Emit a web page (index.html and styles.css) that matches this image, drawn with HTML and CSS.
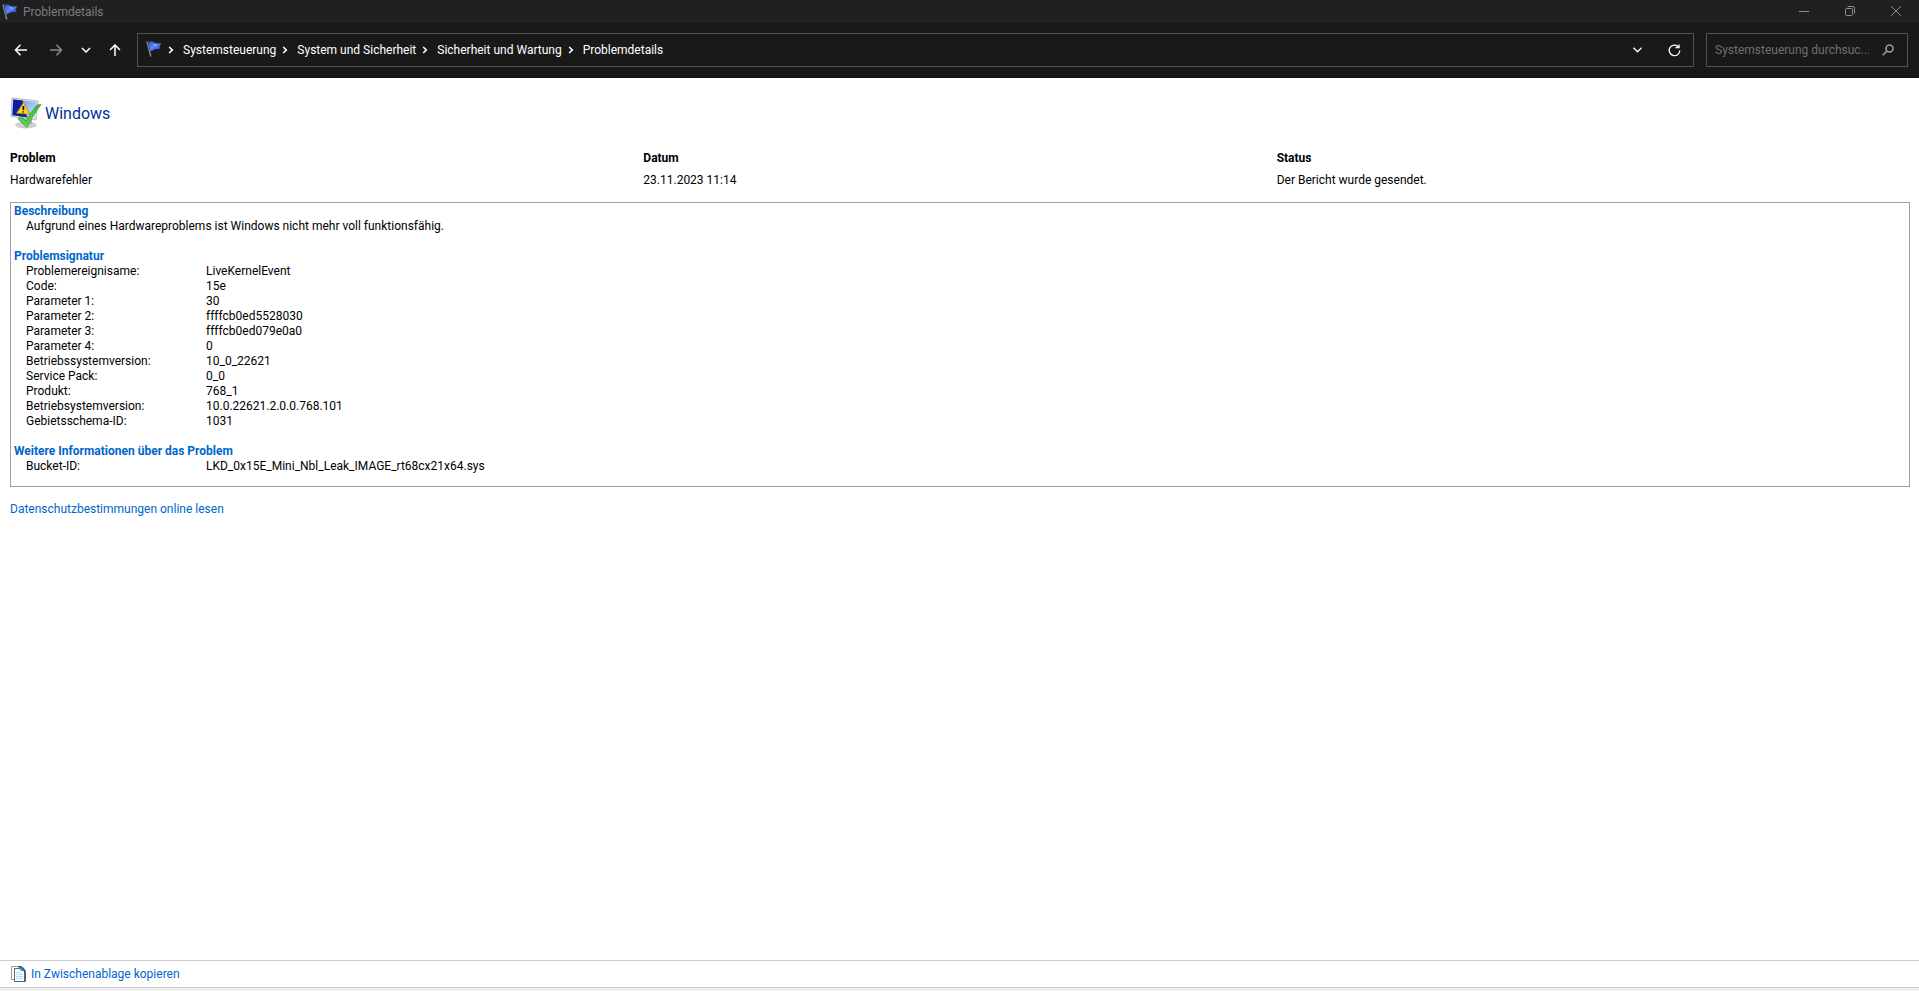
FILE: index.html
```
<!DOCTYPE html>
<html lang="de">
<head>
    <meta charset="UTF-8">
    <meta name="viewport" content="width=device-width, initial-scale=1.0">
    <title>Problemdetails</title>
    <link rel="stylesheet" href="styles.css">
</head>
<body>

<svg class="symbols" aria-hidden="true">
    <linearGradient id="flagBlue" x1="0" y1="0" x2="1" y2="1">
        <stop offset="0" stop-color="#2b50c8"/>
        <stop offset="0.45" stop-color="#6684e6"/>
        <stop offset="1" stop-color="#1c3bb4"/>
    </linearGradient>
    <symbol id="flag" viewBox="0 0 16 16">
        <path d="M1 .5L4.800 15.500" stroke="#77808a" stroke-width="1.6" fill="none"/>
        <path d="M2 1.200C4 .2 6.500 .2 8 1.500C9.500 2.500 12 2.500 15.500 2.200C13.800 3.800 13.300 5.500 14.500 7.500C12 8.500 10 7.500 8.500 8.500C7 9.500 5.500 9.500 4.300 11Z" fill="url(#flagBlue)" stroke="#2440a8" stroke-width=".5"/>
        <path d="M7 3.500Q9.500 2.500 11.500 5Q9 5 7 3.500Z" fill="#a9bdfa"/>
    </symbol>
    <symbol id="crumb" viewBox="0 0 6 8">
        <path d="M1.200 1L4.300 4L1.200 7" stroke="#fff" stroke-width="1.6" fill="none"/>
    </symbol>
</svg>

<header>
    <div class="title-bar">
        <svg class="flag" aria-hidden="true"><use href="#flag"/></svg>
        <span class="window-title">Problemdetails</span>
        <div class="window-buttons">
            <button type="button" aria-label="Minimieren">
                <svg width="10" height="10" viewBox="0 0 10 10"><path d="M0 5.500H10"/></svg>
            </button>
            <button type="button" aria-label="Verkleinern">
                <svg width="10" height="10" viewBox="0 0 10 10"><rect x=".5" y="2.500" width="7" height="7" rx="1"/><path d="M2.500 .5H8Q9.500 .5 9.500 2V7.500"/></svg>
            </button>
            <button type="button" aria-label="Schließen">
                <svg width="10" height="10" viewBox="0 0 10 10"><path d="M0 0L10 10M10 0L0 10"/></svg>
            </button>
        </div>
    </div>

    <div class="toolbar">
        <nav class="history" aria-label="Verlauf">
            <button type="button" aria-label="Zurück">
                <svg width="14" height="12" viewBox="0 0 14 12"><path d="M6.500 .8L1.500 6L6.500 11.200M1.500 6H13"/></svg>
            </button>
            <button type="button" class="off" aria-label="Vorwärts">
                <svg width="14" height="12" viewBox="0 0 14 12"><path d="M7.500 .8L12.500 6L7.500 11.200M12.500 6H1"/></svg>
            </button>
            <button type="button" class="recent" aria-label="Zuletzt besucht">
                <svg width="10" height="6" viewBox="0 0 10 6"><path d="M1 1L5 5L9 1"/></svg>
            </button>
            <button type="button" class="up" aria-label="Nach oben">
                <svg width="12" height="12" viewBox="0 0 12 12"><path d="M1 6L6 1L11 6M6 1V12"/></svg>
            </button>
        </nav>

        <div class="address">
            <svg class="flag" aria-hidden="true"><use href="#flag"/></svg>
            <svg class="crumb" aria-hidden="true"><use href="#crumb"/></svg>
            <a href="#">Systemsteuerung</a>
            <svg class="crumb" aria-hidden="true"><use href="#crumb"/></svg>
            <a href="#">System und Sicherheit</a>
            <svg class="crumb" aria-hidden="true"><use href="#crumb"/></svg>
            <a href="#">Sicherheit und Wartung</a>
            <svg class="crumb" aria-hidden="true"><use href="#crumb"/></svg>
            <a href="#">Problemdetails</a>
            <div class="address-buttons">
                <button type="button" aria-label="Vorherige Orte">
                    <svg width="9" height="6" viewBox="0 0 9 6"><path d="M.5 .8L4.500 4.800L8.500 .8"/></svg>
                </button>
                <button type="button" aria-label="Aktualisieren">
                    <svg width="13" height="13" viewBox="0 0 13 13"><path d="M10.600 3A5.300 5.300 0 1 0 11.800 6.500M11 .5V3.700H7.500"/></svg>
                </button>
            </div>
        </div>

        <div class="search">
            <input type="text" aria-label="Systemsteuerung durchsuchen" placeholder="Systemsteuerung durchsuc...">
            <button type="button" aria-label="Suchen">
                <svg width="12" height="12" viewBox="0 0 12 12"><circle cx="7.500" cy="4.500" r="3.500"/><path d="M5 7L.7 11.300"/></svg>
            </button>
        </div>
    </div>
</header>

<main>
    <div class="heading">
        <svg class="report-icon" viewBox="0 0 32 32" aria-hidden="true">
            <defs>
                <linearGradient id="screen" x1="0" y1="0" x2="1" y2="1">
                    <stop offset="0" stop-color="#5c8cea"/>
                    <stop offset="1" stop-color="#dceafc"/>
                </linearGradient>
                <linearGradient id="tick" x1="0" y1="0" x2="0" y2="1">
                    <stop offset="0" stop-color="#3fb83a"/>
                    <stop offset="1" stop-color="#56e04c"/>
                </linearGradient>
            </defs>
            <ellipse cx="16" cy="28" rx="11" ry="3.500" fill="#cfcfcf"/>
            <path d="M13 20H22V27H13Z" fill="#b4b4b4"/>
            <path d="M2 1L28 4L26 23L1 19.500Z" fill="#e4e4e4" stroke="#a5a5a5" stroke-width=".7"/>
            <path d="M3.200 2.500L26.300 5L24.600 21.500L2.400 18.300Z" fill="url(#screen)"/>
            <path d="M3.200 2.500L13 3.600Q11 12 18 20.500L2.400 18.300Z" fill="#0b1ea0"/>
            <path d="M13.500 5.500L20 17.300L6.500 16.300Z" fill="#ffd51c" stroke="#a88400" stroke-width=".8" stroke-linejoin="round"/>
            <path d="M13.400 9V13M13.200 14.300V15.500" stroke="#111" stroke-width="1.700"/>
            <path d="M8 22L11.500 19.500L16 24.500Q20.500 15 27 8L31 7.500Q22 19 17 30.500Z" fill="url(#tick)" stroke="#299528" stroke-width=".7"/>
        </svg>
        <h1>Windows</h1>
    </div>

    <table class="summary">
        <thead>
            <tr><th>Problem</th><th>Datum</th><th>Status</th></tr>
        </thead>
        <tbody>
            <tr><td>Hardwarefehler</td><td>23.11.2023 11:14</td><td>Der Bericht wurde gesendet.</td></tr>
        </tbody>
    </table>

    <div class="report">
        <section>
            <h2>Beschreibung</h2>
            <p>Aufgrund eines Hardwareproblems ist Windows nicht mehr voll funktionsfähig.</p>
        </section>
        <section>
            <h2>Problemsignatur</h2>
            <table>
                <tr><th>Problemereignisame:</th><td>LiveKernelEvent</td></tr>
                <tr><th>Code:</th><td>15e</td></tr>
                <tr><th>Parameter 1:</th><td>30</td></tr>
                <tr><th>Parameter 2:</th><td>ffffcb0ed5528030</td></tr>
                <tr><th>Parameter 3:</th><td>ffffcb0ed079e0a0</td></tr>
                <tr><th>Parameter 4:</th><td>0</td></tr>
                <tr><th>Betriebssystemversion:</th><td>10_0_22621</td></tr>
                <tr><th>Service Pack:</th><td>0_0</td></tr>
                <tr><th>Produkt:</th><td>768_1</td></tr>
                <tr><th>Betriebsystemversion:</th><td>10.0.22621.2.0.0.768.101</td></tr>
                <tr><th>Gebietsschema-ID:</th><td>1031</td></tr>
            </table>
        </section>
        <section>
            <h2>Weitere Informationen über das Problem</h2>
            <table>
                <tr><th>Bucket-ID:</th><td>LKD_0x15E_Mini_Nbl_Leak_IMAGE_rt68cx21x64.sys</td></tr>
            </table>
        </section>
    </div>

    <a class="privacy" href="#">Datenschutzbestimmungen online lesen</a>
</main>

<footer>
    <a href="#">
        <svg width="15" height="16" viewBox="0 0 15 16" aria-hidden="true">
            <path d="M.5 .5H8V13.500H.5Z" fill="#fff" stroke="#9a9a9a"/>
            <path d="M3.500 2.500H10L14 6V15.500H3.500Z" fill="#fff" stroke="#5d6670"/>
            <path d="M5 6.500H11M5 8.500H12M5 10.500H12M5 12.500H12" stroke="#a9dcf8"/>
            <path d="M7 0Q12 1 14 5V15.500" fill="none" stroke="#33465c" stroke-width="1.500"/>
            <path d="M7 .5Q11 1 13.500 5.500L9.500 4.500Z" fill="#2f8fd0"/>
        </svg>
        <span>In Zwischenablage kopieren</span>
    </a>
</footer>

</body>
</html>
```
FILE: styles.css
```
* {
    box-sizing: border-box;
}
body {
    margin: 0;
    min-height: 100vh;
    display: flex;
    flex-direction: column;
    background-color: #ffffff;
    color: #000000;
    font-family: Roboto, "Noto Sans", sans-serif;
    font-size: 12px;
    line-height: 15px;
}
a {
    color: #0066cc;
    text-decoration: none;
}
a:hover {
    text-decoration: underline;
}
button {
    display: flex;
    align-items: center;
    justify-content: center;
    padding: 0;
    border: none;
    background: none;
}
button svg {
    fill: none;
    stroke: #ffffff;
}
.symbols {
    position: absolute;
    width: 0;
    height: 0;
}
.flag {
    width: 16px;
    height: 16px;
    flex: none;
}

/* Title bar */
.title-bar {
    display: flex;
    align-items: center;
    height: 23px;
    padding-left: 2px;
    background-color: #202020;
}
.window-title {
    padding-top: 2px;
    margin-left: 5px;
    color: #7d7d7d;
}
.window-buttons {
    display: flex;
    margin-left: auto;
}
.window-buttons button {
    width: 46px;
    height: 20px;
    margin-bottom: 2px;
}
.window-buttons svg {
    stroke: #8c8c8c;
}

/* Navigation toolbar */
.toolbar {
    display: flex;
    align-items: center;
    height: 55px;
    padding: 0 11px 1px 0;
    background-color: #191919;
    border-bottom: 1px solid #101010;
}
.history {
    display: flex;
    padding-left: 3px;
    width: 137px;
}
.history button {
    width: 35px;
    height: 34px;
}
.history svg {
    stroke-width: 1.5px;
}
.history .off svg {
    stroke: #8c8c8c;
}
.history .recent {
    width: 26px;
}
.history .up {
    width: 32px;
}
.address {
    display: flex;
    flex: 1;
    align-items: center;
    height: 34px;
    padding-left: 8px;
    border: 1px solid #535353;
}
.address a {
    padding-top: 2px;
    color: #ffffff;
}
.address .flag {
    margin-bottom: 2px;
}
.crumb {
    width: 6px;
    height: 8px;
    margin: 0 9px 0 6px;
    flex: none;
}
.address-buttons {
    display: flex;
    margin-left: auto;
}
.address-buttons button {
    width: 37px;
    height: 32px;
    padding-top: 1px;
}
.address-buttons svg {
    stroke-width: 1.3px;
}
.search {
    display: flex;
    align-items: center;
    width: 202px;
    height: 34px;
    margin-left: 12px;
    border: 1px solid #535353;
}
.search input {
    flex: 1;
    min-width: 0;
    padding: 2px 0 0 8px;
    border: none;
    outline: none;
    background: none;
    color: #ffffff;
    font: inherit;
}
.search input::placeholder {
    color: #6f6f6f;
    opacity: 1;
}
.search button {
    width: 38px;
    height: 32px;
}
.search button svg {
    stroke: #9c9c9c;
    stroke-width: 1.6px;
}

/* Problem report */
main {
    flex: 1;
    padding: 19px 9px 19px 10px;
}
.heading {
    display: flex;
    align-items: center;
    gap: 3px;
    height: 32px;
}
.report-icon {
    width: 32px;
    height: 32px;
}
h1 {
    margin: 0;
    padding-top: 2px;
    color: #003399;
    font-size: 16px;
    font-weight: 400;
    line-height: 20px;
}
table {
    border-collapse: collapse;
}
th,
td {
    padding: 0;
    text-align: left;
    vertical-align: top;
}
.summary {
    width: 100%;
    margin: 18px 0 11px;
    table-layout: fixed;
}
.summary th,
.summary td {
    height: 22px;
    padding-top: 4px;
}
.report {
    padding: 1px 3px 12px;
    border: 1px solid #a0a0a0;
}
.report section + section {
    margin-top: 15px;
}
.report h2 {
    margin: 0;
    color: #0066cc;
    font-size: 12px;
    font-weight: 700;
    line-height: 15px;
}
.report p {
    margin: 0 0 0 12px;
}
.report table {
    margin-left: 12px;
}
.report th {
    width: 180px;
    font-weight: 400;
}
.privacy {
    display: inline-block;
    margin-top: 15px;
}

footer {
    height: 31px;
    padding: 5px 11px;
    background-color: #ffffff;
    border-top: 1px solid #cccccc;
    border-bottom: 3px solid #f0f0f0;
    box-shadow: inset 0 -1px #cccccc;
}
footer a {
    display: inline-flex;
    align-items: center;
    gap: 5px;
}
footer span {
    padding-top: 1px;
}
```
